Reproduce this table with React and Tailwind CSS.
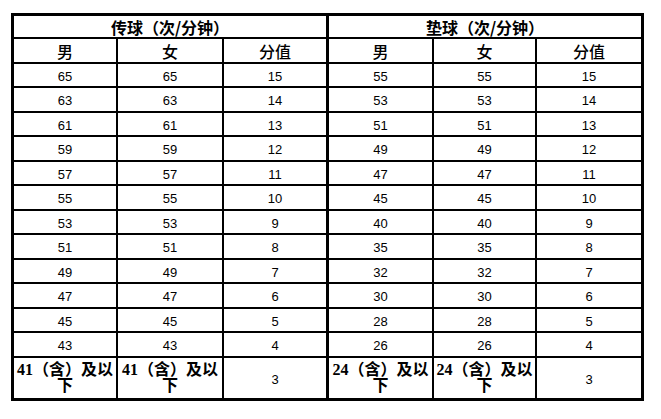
import React from "react";

const left = [65, 63, 61, 59, 57, 55, 53, 51, 49, 47, 45, 43];
const right = [55, 53, 51, 49, 47, 45, 40, 35, 32, 30, 28, 26];
const scores = [15, 14, 13, 12, 11, 10, 9, 8, 7, 6, 5, 4];

const num = "flex items-center justify-center bg-white text-[13px] text-black pt-[3px]";
const cjk = { fontFamily: '"Noto Sans CJK SC", sans-serif' };

function Low({ n, extra = "" }) {
  return (
    <div
      className={`flex flex-col items-center justify-center bg-white font-bold text-[16px] leading-[16px] text-black whitespace-nowrap ${extra}`}
      style={{ fontFamily: '"Liberation Serif", "Noto Sans CJK SC", serif' }}
    >
      <span>{n}（含）及以</span>
      <span>下</span>
    </div>
  );
}

export default function App() {
  return (
    <div className="w-[661px] h-[419px] bg-white pl-[11px] pt-[13px]">
      <div
        className="grid w-[633px] bg-black p-[3px] gap-[2px] grid-cols-[102px_104px_103px_103px_101px_104px] grid-rows-[21px_23px_22px_23px_22px_23px_22px_23px_22px_23px_22px_23px_22px_23px_40px]"
        style={{ fontFamily: '"Liberation Sans", "Noto Sans CJK SC", sans-serif' }}
      >
        <div className="col-span-3 flex items-center justify-center bg-white border-r border-black font-bold text-[16px] leading-none text-black" style={cjk}>
          传球（次/分钟）
        </div>
        <div className="col-span-3 flex items-center justify-center bg-white font-bold text-[16px] leading-none text-black" style={cjk}>
          垫球（次/分钟）
        </div>
        {["男", "女", "分值", "男", "女", "分值"].map((t, i) => (
          <div
            key={i}
            className={`flex items-center justify-center bg-white text-[16px] leading-none font-medium text-black ${i === 2 ? "border-r border-black" : ""}`}
            style={cjk}
          >
            {t}
          </div>
        ))}
        {scores.map((s, r) => (
          <React.Fragment key={r}>
            <div className={num}>{left[r]}</div>
            <div className={num}>{left[r]}</div>
            <div className={`${num} border-r border-black`}>{s}</div>
            <div className={num}>{right[r]}</div>
            <div className={num}>{right[r]}</div>
            <div className={num}>{s}</div>
          </React.Fragment>
        ))}
        <Low n="41" />
        <Low n="41" />
        <div className={`${num} border-r border-black`}>3</div>
        <Low n="24" />
        <Low n="24" />
        <div className={num}>3</div>
      </div>
    </div>
  );
}
